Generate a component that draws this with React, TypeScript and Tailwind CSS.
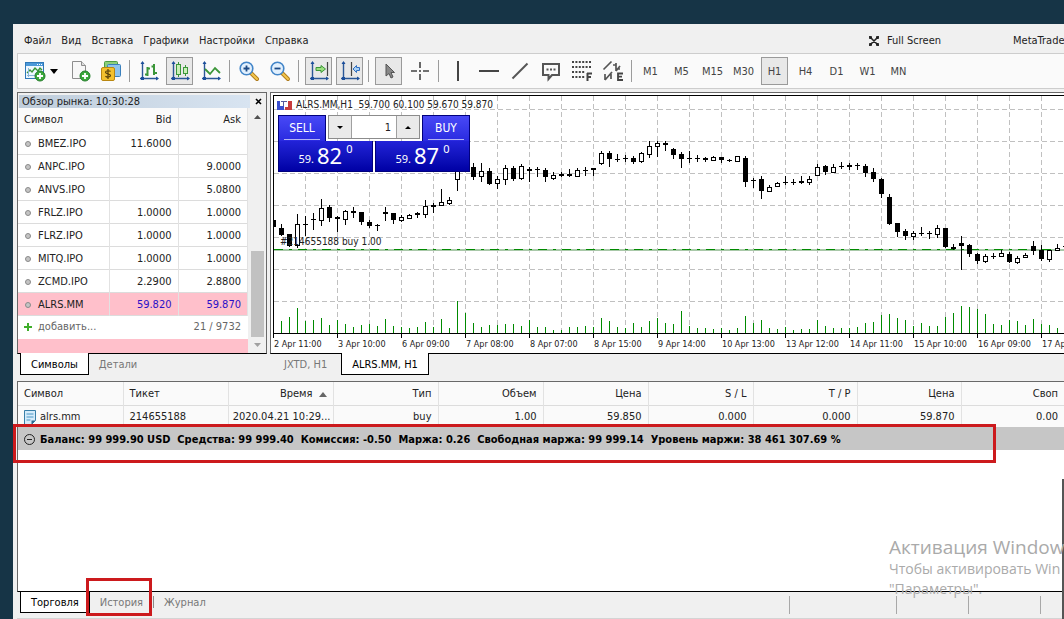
import type { ReactNode } from "react";
import clsx from "clsx";

const menu = ["Файл", "Вид", "Вставка", "Графики", "Настройки", "Справка"];
const timeframes = ["M1", "M5", "M15", "M30", "H1", "H4", "D1", "W1", "MN"];

const quotes = [
  { symbol: "BMEZ.IPO", bid: "11.6000", ask: "" },
  { symbol: "ANPC.IPO", bid: "", ask: "9.0000" },
  { symbol: "ANVS.IPO", bid: "", ask: "5.0800" },
  { symbol: "FRLZ.IPO", bid: "1.0000", ask: "1.0000" },
  { symbol: "FLRZ.IPO", bid: "1.0000", ask: "1.0000" },
  { symbol: "MITQ.IPO", bid: "1.0000", ask: "1.0000" },
  { symbol: "ZCMD.IPO", bid: "2.2900", ask: "2.8800" },
  { symbol: "ALRS.MM", bid: "59.820", ask: "59.870", active: true },
];

const dates = [
  "2 Apr 11:00",
  "3 Apr 10:00",
  "6 Apr 09:00",
  "7 Apr 08:00",
  "8 Apr 07:00",
  "8 Apr 15:00",
  "9 Apr 14:00",
  "10 Apr 13:00",
  "13 Apr 12:00",
  "14 Apr 11:00",
  "15 Apr 10:00",
  "16 Apr 09:00",
  "17 Apr",
];

// high, body top, body bottom, low, bullish (hollow) flag
const candles: number[][] = [
  [124, 124, 131, 131, 0], [128, 132, 139, 139, 0], [138, 138, 150, 150, 0], [118, 128, 149, 151, 1],
  [120, 128, 129, 139, 0], [117, 123, 124, 133, 0], [103, 112, 124, 129, 1], [109, 111, 122, 125, 0],
  [120, 121, 123, 135, 0], [114, 115, 123, 128, 1], [111, 115, 117, 121, 0], [116, 116, 126, 128, 0],
  [124, 126, 130, 131, 0], [128, 129, 130, 134, 0], [111, 116, 118, 124, 0], [117, 117, 124, 127, 0],
  [119, 121, 124, 125, 1], [118, 119, 122, 122, 1], [116, 117, 119, 121, 0], [104, 110, 118, 121, 1],
  [107, 109, 111, 116, 0], [93, 106, 109, 109, 1], [101, 104, 107, 108, 1], [60, 70, 83, 94, 1],
  [64, 68, 74, 75, 0], [67, 71, 81, 83, 0], [67, 75, 80, 85, 1], [72, 75, 88, 88, 0],
  [80, 83, 87, 92, 1], [69, 72, 83, 88, 1], [70, 72, 83, 84, 0], [68, 70, 82, 83, 1],
  [71, 73, 75, 85, 0], [71, 73, 74, 80, 0], [72, 74, 81, 85, 0], [76, 79, 82, 83, 1],
  [76, 78, 80, 80, 0], [73, 78, 80, 80, 0], [72, 74, 80, 80, 1], [71, 74, 75, 79, 0],
  [72, 72, 74, 79, 0], [55, 57, 67, 68, 1], [55, 57, 63, 70, 0], [58, 63, 64, 65, 0],
  [59, 62, 63, 65, 0], [60, 62, 66, 67, 0], [56, 57, 65, 66, 1], [45, 50, 58, 61, 1],
  [45, 47, 50, 60, 1], [45, 47, 49, 54, 0], [52, 53, 59, 62, 0], [56, 58, 63, 71, 0],
  [55, 62, 63, 66, 0], [59, 62, 63, 65, 0], [61, 62, 64, 65, 0], [60, 61, 64, 64, 1],
  [61, 61, 64, 66, 0], [63, 64, 65, 65, 0], [60, 60, 65, 65, 1], [60, 62, 86, 90, 0],
  [82, 84, 85, 91, 0], [80, 83, 95, 102, 0], [89, 91, 95, 95, 1], [86, 87, 90, 90, 1],
  [80, 86, 87, 88, 0], [83, 86, 87, 88, 0], [80, 85, 87, 87, 0], [80, 83, 86, 88, 1],
  [68, 71, 79, 79, 1], [69, 70, 76, 78, 0], [68, 71, 76, 76, 1], [66, 70, 71, 72, 0],
  [67, 69, 71, 73, 0], [67, 69, 70, 73, 0], [68, 70, 77, 80, 0], [72, 76, 83, 85, 0],
  [82, 83, 98, 101, 0], [98, 101, 128, 128, 0], [127, 127, 136, 140, 0], [133, 135, 140, 143, 0],
  [135, 137, 140, 143, 1], [131, 137, 138, 139, 0], [135, 137, 138, 142, 0], [129, 132, 138, 141, 1],
  [132, 132, 151, 151, 0], [148, 151, 153, 153, 0], [140, 147, 150, 173, 0], [148, 149, 158, 160, 0],
  [157, 158, 165, 167, 0], [158, 160, 165, 166, 1], [157, 160, 161, 162, 0], [154, 157, 160, 160, 1],
  [156, 158, 166, 166, 0], [160, 162, 166, 167, 1], [157, 159, 161, 161, 1], [145, 150, 155, 158, 0],
  [149, 154, 163, 164, 0], [154, 154, 163, 165, 1], [148, 152, 154, 154, 1], [150, 150, 151, 151, 0],
];

const volumes = [
  0, 12, 16, 25, 12, 13, 15, 8, 13, 9, 6, 8, 9, 7, 14, 7, 6, 5, 6, 11, 6, 14, 5, 32, 20,
  10, 6, 8, 8, 9, 9, 7, 13, 6, 6, 3, 3, 6, 6, 7, 6, 15, 12, 6, 5, 10, 6, 12, 15, 10,
  9, 22, 7, 5, 5, 4, 5, 3, 5, 17, 10, 13, 5, 4, 6, 3, 4, 4, 13, 7, 5, 5, 5, 6, 10,
  11, 18, 19, 15, 13, 7, 10, 7, 7, 16, 20, 27, 26, 24, 19, 9, 8, 13, 12, 8, 14, 9, 8, 5,
];

const tradeColumns = ["Символ", "Тикет", "Время", "Тип", "Объем", "Цена", "S / L", "T / P", "Цена", "Своп"];
const tradeRow = ["alrs.mm", "214655188", "2020.04.21 10:29...", "buy", "1.00", "59.850", "0.000", "0.000", "59.870", "0.00"];

function ToolButton({ label, active, children }: { label: string; active?: boolean; children: ReactNode }) {
  return (
    <button
      aria-label={label}
      className={clsx(
        "flex h-7 w-[27px] shrink-0 items-center justify-center border text-[#444]",
        active ? "border-[#9a9a9a] bg-[#e8e8e8]" : "border-transparent"
      )}
    >
      {children}
    </button>
  );
}

function Separator({ wide }: { wide?: boolean }) {
  return <span className={clsx("h-[22px] w-px shrink-0 bg-[#9c9c9c]", wide ? "mr-[2px] ml-px" : "mx-px")} />;
}

function Icon({ children }: { children: ReactNode }) {
  return (
    <svg width="22" height="22" viewBox="0 0 22 22" fill="none" className="shrink-0">
      {children}
    </svg>
  );
}

function Axes() {
  return (
    <>
      <path d="M4.5 2v18M2 18.5h18" stroke="#2b5797" strokeWidth="1.4" />
      <path d="M2.5 4l2-3 2 3zM18 16.5l3 2-3 2z" fill="#1c4f9c" />
      <rect x="3" y="17" width="3" height="3" fill="#1c4f9c" />
    </>
  );
}

function PlusBadge() {
  return (
    <>
      <circle cx="16" cy="16" r="5" fill="#3aa83a" stroke="#247d2a" />
      <path d="M16 13v6M13 16h6" stroke="#fff" strokeWidth="1.8" />
    </>
  );
}

function Magnifier({ plus }: { plus?: boolean }) {
  return (
    <Icon>
      <path d="M13 13l6 6" stroke="#b07d1e" strokeWidth="4" strokeLinecap="round" />
      <path d="M13 13l6 6" stroke="#f3c64d" strokeWidth="2" strokeLinecap="round" />
      <circle cx="8.5" cy="8.5" r="6.3" fill="#e2f0fd" stroke="#4285c8" strokeWidth="1.6" />
      <path d={plus ? "M5.5 8.5h6M8.5 5.5v6" : "M5.5 8.5h6"} stroke="#1d4a86" strokeWidth="1.8" />
    </Icon>
  );
}

function Toolbar() {
  return (
    <div className="ml-1 flex h-9 items-center gap-1 overflow-hidden border border-r-0 border-[#cdcdcd] bg-[#fafafa]">
      <button aria-label="Новый график" className="flex h-7 w-11 shrink-0 items-center gap-1 pl-[6px]">
        <Icon>
          <rect x="1.5" y="2.5" width="18" height="16" fill="#eef7ff" stroke="#2f78b8" />
          <path d="M2 3h17v3H2z" fill="#4b98d8" />
          <path d="M13 4.5h5" stroke="#fff" strokeDasharray="1 1" />
          <path d="M3 13l3-3 2 2 3-4 3 3 2-3 2 2" stroke="#3b9639" strokeWidth="1.4" />
          <path d="M4.5 8v9M3 15.5h9" stroke="#8ab6d8" />
          <PlusBadge />
        </Icon>
        <svg width="8" height="5" viewBox="0 0 8 5" className="shrink-0">
          <path d="M0 0h8L4 5z" fill="#000" />
        </svg>
      </button>
      <ToolButton label="Новый ордер">
        <Icon>
          <path d="M3.5 1.5h9l4 4v13h-13z" fill="#f7f7f7" stroke="#8d8d8d" />
          <path d="M12.5 1.5v4h4" fill="#ddd" stroke="#8d8d8d" />
          <PlusBadge />
        </Icon>
      </ToolButton>
      <ToolButton label="Символы">
        <Icon>
          <rect x="4.5" y="1.5" width="13" height="11" rx="1" fill="#8ccf7a" stroke="#4c9c43" />
          <rect x="7.5" y="4.5" width="13" height="12" rx="1" fill="#8ec4ee" stroke="#3a80bd" />
          <rect x="1.5" y="7.5" width="13" height="13" rx="1.5" fill="#f3c12e" stroke="#b98711" />
          <path d="M10.5 11.5c-1-1.2-5-1-5 .8 0 1.9 5 1.3 5 3.2 0 1.8-4 2-5 .6M8 9v10" stroke="#59410a" strokeWidth="1.2" />
        </Icon>
      </ToolButton>
      <Separator />
      <ToolButton label="Бары">
        <Icon>
          <Axes />
          <path d="M9.5 7v9M7 14.5h2.5M9.5 8.5h2.5M16 4v11M13.5 6.5H16M16 13h3" stroke="#3b9639" strokeWidth="2" />
        </Icon>
      </ToolButton>
      <ToolButton label="Свечи" active>
        <Icon>
          <Axes />
          <path d="M9.5 2v15M16.5 5v11" stroke="#3b9639" />
          <rect x="7.5" y="4.5" width="4" height="10" fill="#c9efb8" stroke="#3b9639" />
          <rect x="14.5" y="7.5" width="4" height="6" fill="#c9efb8" stroke="#3b9639" />
        </Icon>
      </ToolButton>
      <ToolButton label="Линия">
        <Icon>
          <Axes />
          <path d="M5 9l5 5 5-6 5 5" stroke="#3b9639" strokeWidth="1.8" />
        </Icon>
      </ToolButton>
      <Separator />
      <ToolButton label="Увеличить">
        <Magnifier plus />
      </ToolButton>
      <ToolButton label="Уменьшить">
        <Magnifier />
      </ToolButton>
      <Separator wide />
      <ToolButton label="Автопрокрутка" active>
        <Icon>
          <Axes />
          <path d="M19.5 2v14" stroke="#444" strokeWidth="1.2" />
          <path d="M8 7.5h5v-2l4.5 3.500-4.500 3.500v-2H8z" fill="#9be07f" stroke="#3b9639" />
        </Icon>
      </ToolButton>
      <ToolButton label="Сдвиг графика" active>
        <Icon>
          <Axes />
          <path d="M12.5 2v14" stroke="#444" strokeWidth="1.2" />
          <path d="M20.5 7.5h-3v-2L14 9l3.5 3.5v-2h3z" fill="#a9d0f5" stroke="#2f6fc0" />
        </Icon>
      </ToolButton>
      <Separator wide />
      <ToolButton label="Курсор" active>
        <Icon>
          <path d="M8 4v12l3-2.5 2 4.5 2-1-2-4.500h3.500z" fill="#888" stroke="#555" />
        </Icon>
      </ToolButton>
      <ToolButton label="Перекрестие">
        <Icon>
          <path d="M11 2v6M11 14v6M2 11h6M14 11h6M11 10v2" stroke="#444" strokeWidth="1.6" />
        </Icon>
      </ToolButton>
      <Separator />
      <ToolButton label="Вертикальная линия">
        <Icon>
          <path d="M11 1v20" stroke="#444" strokeWidth="2" />
        </Icon>
      </ToolButton>
      <ToolButton label="Горизонтальная линия">
        <Icon>
          <path d="M1 11h20" stroke="#444" strokeWidth="2" />
        </Icon>
      </ToolButton>
      <ToolButton label="Трендовая линия">
        <Icon>
          <path d="M3.5 18.5l15-15" stroke="#555" strokeWidth="2" />
        </Icon>
      </ToolButton>
      <ToolButton label="Текст">
        <Icon>
          <path d="M3 4h16v11h-7l-3.5 4v-4H3z" stroke="#555" strokeWidth="2" />
          <path d="M6.5 9.5h9" stroke="#555" strokeWidth="2" strokeDasharray="2 1.5" />
        </Icon>
      </ToolButton>
      <ToolButton label="Фибоначчи">
        <Icon>
          <path d="M1 2h19M1 7h19M1 12h13M1 17h13" stroke="#444" strokeWidth="2" strokeDasharray="2 1.4" />
          <path d="M16.5 21v-8M16 13.5h5M16 17h4" stroke="#444" strokeWidth="2" />
        </Icon>
      </ToolButton>
      <ToolButton label="Элементы">
        <Icon>
          <path
            d="M1.5 9.5l8-8M3 20l7-8M9 14v5M3 14v6M14 3v8M11 5h3M14 9h4M18 6l-4 5"
            stroke="#555"
            strokeWidth="1.7"
          />
          <path d="M21 13.5h-5V20h5M16 16.7h4" stroke="#444" strokeWidth="1.8" />
        </Icon>
      </ToolButton>
      <Separator />
      {timeframes.map((tf) => (
        <ToolButton key={tf} label={tf} active={tf === "H1"}>
          <span className="pt-px">{tf}</span>
        </ToolButton>
      ))}
    </div>
  );
}

function Tab({ active, children }: { active?: boolean; children: ReactNode }) {
  return (
    <button
      className={clsx(
        "-mt-px h-[22px] shrink-0 px-[10px] pt-[2px]",
        active ? "border border-t-0 border-black bg-white text-black" : "text-[#777]"
      )}
    >
      {children}
    </button>
  );
}

function MarketWatch() {
  return (
    <section className="w-[250px] shrink-0">
      <div className="flex h-[262px] flex-col border border-[#696969] border-b-black bg-[#f0f0f0] pt-[2px]">
        <div className="flex h-[13px] items-center justify-between pl-px">
          <h2 className="h-full grow bg-linear-to-r from-[#bfcddb] to-[#d8e4f1] pl-[3px] leading-[14px]">
            Обзор рынка: 10:30:28
          </h2>
          <button aria-label="Закрыть" className="flex w-4 justify-center">
            <svg width="7" height="7" viewBox="0 0 7 7">
              <path d="M1 1l5 5M6 1L1 6" stroke="#000" strokeWidth="1.6" />
            </svg>
          </button>
        </div>
        <div className="flex min-h-0 grow overflow-hidden">
          <div className="min-w-0 grow bg-white">
            <table className="w-full table-fixed border-collapse">
              <thead>
                <tr className="h-[23px] border-b border-[#dcdcdc] bg-[#fafafa]">
                  <th className="w-[91px] border-r border-[#e2e2e2] pt-[2px] pl-[6px] text-left font-normal">Символ</th>
                  <th className="w-[69px] border-r border-[#e2e2e2] pt-[2px] pr-[6px] text-right font-normal">Bid</th>
                  <th className="border-r border-[#e2e2e2] pt-[2px] pr-[6px] text-right font-normal">Ask</th>
                </tr>
              </thead>
              <tbody>
                {quotes.map((q) => (
                  <tr
                    key={q.symbol}
                    className={clsx("h-[23px] border-b border-[#dcdcdc]", q.active && "bg-[#ffc0cb]")}
                  >
                    <td className="border-r border-[#e2e2e2] pt-[2px] pl-[7px]">
                      <span className="flex items-center gap-[7px]">
                        <span className="size-[6px] rounded-full border border-[#8a8a8a] bg-[#c4c4c4]" />
                        {q.symbol}
                      </span>
                    </td>
                    <td className={clsx("border-r border-[#e2e2e2] pt-[2px] pr-[6px] text-right", q.active && "text-[#2a10c8]")}>
                      {q.bid}
                    </td>
                    <td className={clsx("border-r border-[#e2e2e2] pt-[2px] pr-[6px] text-right", q.active && "text-[#2a10c8]")}>
                      {q.ask}
                    </td>
                  </tr>
                ))}
              </tbody>
            </table>
            <div className="flex h-[23px] items-center text-[#666]">
              <svg width="8" height="8" viewBox="0 0 8 8" className="mr-[6px] ml-[6px]">
                <path d="M4 0v8M0 4h8" stroke="#3fae2a" strokeWidth="2" />
              </svg>
              добавить...
              <span className="ml-auto pr-[7px]">21 / 9732</span>
            </div>
            <div className="h-[15px] bg-[#ffc0cb]" />
          </div>
          <div className="flex w-[18px] shrink-0 flex-col items-center pt-[7px] pb-[6px]">
            <svg width="7" height="4" viewBox="0 0 7 4">
              <path d="M0 4h7L3.5 0z" fill="#505050" />
            </svg>
            <div className="mt-auto mb-[6px] h-[86px] w-[13px] bg-[#c1c1c1]" />
            <svg width="7" height="4" viewBox="0 0 7 4">
              <path d="M0 0h7L3.5 4z" fill="#a0a0a0" />
            </svg>
          </div>
        </div>
      </div>
      <div className="flex pl-[3px]">
        <Tab active>Символы</Tab>
        <Tab>Детали</Tab>
      </div>
    </section>
  );
}

function PriceButton({ label, big }: { label: string; big: string }) {
  return (
    <button
      aria-label={label}
      className="flex h-[31px] w-[95px] items-end justify-center border border-t-0 border-[#00007c] bg-linear-to-b from-[#2222d8] to-[#0000a4] pb-1 font-['Noto_Sans',sans-serif] text-white"
    >
      <span className="text-[11px] leading-4">59.</span>
      <span className="ml-[3px] text-[22px] leading-6">{big}</span>
      <span className="ml-1 self-start text-[11px] leading-4">0</span>
    </button>
  );
}

function OneClickTrading() {
  return (
    <div className="absolute top-[19px] left-1 w-48">
      <div className="flex h-[26px] justify-between">
        <button className="w-12 border border-b-0 border-[#00007c] bg-linear-to-b from-[#4848f6] to-[#2a2ae0] px-[5px] text-xs text-white">
          <span className="block border-b border-[#b4b4f4] leading-[22px]">SELL</span>
        </button>
        <div className="flex h-6 w-[92px] border border-[#8c8c8c] bg-white">
          <button aria-label="Меньше" className="flex w-[23px] items-center justify-center border-r border-[#a0a0a0] bg-[#eaeaea]">
            <svg width="6" height="3" viewBox="0 0 6 3">
              <path d="M0 0h6L3 3z" />
            </svg>
          </button>
          <input aria-label="Объем" defaultValue="1" className="w-0 grow pt-[2px] pr-[5px] text-right outline-none" />
          <button aria-label="Больше" className="flex w-[23px] items-center justify-center border-l border-[#a0a0a0] bg-[#eaeaea]">
            <svg width="6" height="3" viewBox="0 0 6 3">
              <path d="M0 3h6L3 0z" />
            </svg>
          </button>
        </div>
        <button className="w-12 border border-b-0 border-[#00007c] bg-linear-to-b from-[#4848f6] to-[#2a2ae0] px-[5px] text-xs text-white">
          <span className="block border-b border-[#b4b4f4] leading-[22px]">BUY</span>
        </button>
      </div>
      <div className="flex justify-between">
        <PriceButton label="Sell 59.820" big="82" />
        <PriceButton label="Buy 59.870" big="87" />
      </div>
    </div>
  );
}

function PriceChart() {
  return (
    <svg className="block h-[237px] w-full" shapeRendering="crispEdges">
      {Array.from({ length: 40 }, (_, i) => (
        <line key={i} x1={31.5 + i * 32} x2={31.5 + i * 32} y1="0" y2="237" stroke="#c0c0c0" strokeDasharray="5 3" />
      ))}
      {Array.from({ length: 7 }, (_, i) => (
        <line key={i} x1="0" x2="100%" y1={13.5 + i * 32} y2={13.5 + i * 32} stroke="#c0c0c0" strokeDasharray="5 3" />
      ))}
      <rect x="0" y="153" width="100%" height="2" fill="#a8c8a8" />
      <line x1="0" x2="100%" y1="153.5" y2="153.5" stroke="#008a00" strokeDasharray="9 6 3 6" />
      {volumes.map((v, i) => (
        <rect key={i} x={i * 8 - 1} y={237 - v} width="1" height={v} fill="#008a00" />
      ))}
      {candles.map(([high, top, bottom, low, up], i) => (
        <g key={i}>
          <rect x={i * 8 - 1} y={high} width="1" height={low - high + 1} />
          {up ? (
            <rect x={i * 8 - 2.5} y={top + 0.5} width="4" height={bottom - top} fill="#fff" stroke="#000" />
          ) : (
            <rect x={i * 8 - 3} y={top} width="5" height={Math.max(bottom - top, 1)} />
          )}
        </g>
      ))}
    </svg>
  );
}

function ChartWindow() {
  return (
    <section className="min-w-0 grow">
      <div className="h-[262px] border-t border-b border-l border-[#696969] border-b-black bg-white pt-[2px] pl-[2px]">
        <div className="relative border-t border-l border-black">
          <PriceChart />
          <div className="absolute top-[2px] left-[3px] flex items-center gap-1 text-[10px] leading-[14px]">
            <svg width="15" height="11" viewBox="0 0 15 11">
              <path d="M0 1h3v5h4v4H0z" fill="#3b4fd0" />
              <path d="M8 7h3V1h4v9H8z" fill="#c83c3c" />
              <path d="M4 1.5h6M6.5 1v5" stroke="#555a9c" />
            </svg>
            <span className="whitespace-pre">ALRS.MM,H1  59.700 60.100 59.670 59.870</span>
          </div>
          <span className="absolute top-[139px] left-[6px] text-[10px] leading-[14px]">#214655188 buy 1.00</span>
          <OneClickTrading />
        </div>
        <div className="flex overflow-hidden border-t border-black text-[9px] leading-3">
          {dates.map((d) => (
            <span key={d} className="h-[18px] w-16 shrink-0 whitespace-nowrap last:w-auto">
              <span className="block h-1 w-px bg-black" />
              <span className="block pl-px">{d}</span>
            </span>
          ))}
        </div>
      </div>
      <div className="flex gap-1 pl-1">
        <Tab>JXTD, H1</Tab>
        <Tab active>ALRS.MM, H1</Tab>
      </div>
    </section>
  );
}

function Toolbox() {
  return (
    <section className="relative mt-[6px] ml-1 flex grow flex-col">
      <div className="grow overflow-hidden border-t border-b border-l border-[#696969] border-b-black bg-white">
        <table className="w-full table-fixed border-collapse">
          <thead>
            <tr className="h-[23px] border-b border-[#dcdcdc] bg-[#fafafa]">
              {tradeColumns.map((name, i) => (
                <th
                  key={i}
                  className={clsx(
                    "border-r border-[#e2e2e2] px-[6px] pt-[2px] font-normal last:border-r-0",
                    i < 7 && "w-[105px]",
                    (i === 7 || i === 8) && "w-[104px]",
                    i < 2 ? "text-left" : "text-right"
                  )}
                >
                  {name}
                  {name === "Время" && (
                    <svg width="8" height="5" viewBox="0 0 8 5" className="ml-[6px] inline">
                      <path d="M0 5h8L4 0z" fill="#666" />
                    </svg>
                  )}
                </th>
              ))}
            </tr>
          </thead>
          <tbody>
            <tr className="h-[22px] bg-[#fafafa]">
              {tradeRow.map((value, i) => (
                <td
                  key={i}
                  className={clsx(
                    "border-r border-[#e2e2e2] pt-[2px] whitespace-nowrap last:border-r-0",
                    i === 2 ? "px-[2px]" : "px-[6px]",
                    i < 2 ? "text-left" : "text-right"
                  )}
                >
                  {i === 0 ? (
                    <span className="flex items-center gap-1">
                      <svg width="12" height="15" viewBox="0 0 12 15" fill="none">
                        <path d="M.5.5h11v10l-4 4h-7z" fill="#d5ebfa" stroke="#3a7fa8" />
                        <path d="M2.5 4h7M2.5 7h7M2.5 10h4" stroke="#4b96c4" />
                        <path d="M11.5 10.5h-4v4z" fill="#2a6a90" />
                      </svg>
                      {value}
                    </span>
                  ) : (
                    value
                  )}
                </td>
              ))}
            </tr>
            <tr className="h-[23px] bg-[#c6c6c6]">
              <td colSpan={10} className="pt-[2px] pl-[6px] font-bold whitespace-pre text-black">
                <span className="flex items-center gap-[5px]">
                  <svg width="11" height="11" viewBox="0 0 11 11" fill="none" stroke="#222">
                    <circle cx="5.5" cy="5.5" r="5" />
                    <path d="M3 5.5h5" />
                  </svg>
                  Баланс: 99 999.90 USD  Средства: 99 999.40  Комиссия: -0.50  Маржа: 0.26  Свободная маржа: 99 999.14  Уровень маржи: 38 461 307.69 %
                </span>
              </td>
            </tr>
          </tbody>
        </table>
      </div>
      <div className="flex h-[27px] overflow-hidden border-b border-[#d4d4d4] pl-[3px]">
        <Tab active>Торговля</Tab>
        <Tab>История</Tab>
        <span className="mt-1 h-3 w-px bg-[#8a8a8a]" />
        <Tab>Журнал</Tab>
        <div className="mt-1 mr-[23px] ml-auto flex h-[18px]">
          <span className="mr-[106px] w-px bg-[#a8a8a8]" />
          <span className="mr-[71px] w-px bg-[#a8a8a8]" />
          <span className="mr-[71px] w-px bg-[#a8a8a8]" />
          <span className="w-px bg-[#a8a8a8]" />
        </div>
      </div>
      {/* Highlights */}
      <div className="absolute top-[43px] right-[68px] -left-1 h-[39px] border-3 border-[#cc1a1d]" />
      <div className="absolute bottom-[3px] left-[69px] h-[38px] w-[66px] border-3 border-[#cc1a1d]" />
      <div className="absolute right-0 bottom-0 h-[140px] w-[2px] bg-[#555]" />
      {/* System watermark */}
      <div className="absolute right-0 bottom-5 w-[175px] font-['Open_Sans',sans-serif] whitespace-nowrap text-[#aaa]">
        <p className="text-[19px] leading-6">Активация Window</p>
        <p className="text-sm leading-5">Чтобы активировать Win</p>
        <p className="text-sm leading-5">"Параметры".</p>
      </div>
    </section>
  );
}

export default function App() {
  return (
    <div className="flex min-h-screen flex-col overflow-hidden bg-[#163446] pt-6 pl-[13px] font-['DejaVu_Sans_Condensed','Noto_Sans',sans-serif] text-[11px] leading-4 text-[#222]">
      <main className="flex grow flex-col bg-[#f0f0f0]">
        <header className="flex h-[29px] items-center pt-[5px] pl-[11px]">
          <nav className="flex gap-[10px]">
            {menu.map((item) => (
              <button key={item}>{item}</button>
            ))}
          </nav>
          <button className="mr-[72px] ml-auto flex items-center gap-2">
            <svg width="10" height="10" viewBox="0 0 10 10" fill="none" stroke="#222" strokeWidth="1.6">
              <path d="M1 1l8 8M9 1L1 9M0 1h3M1 0v3M7 1h3M9 0v3M0 9h3M1 7v3M7 9h3M9 7v3" />
            </svg>
            Full Screen
          </button>
          <span className="w-[51px] whitespace-nowrap">MetaTrade</span>
        </header>
        <Toolbar />
        <div className="mt-[3px] ml-1 flex gap-[3px]">
          <MarketWatch />
          <ChartWindow />
        </div>
        <Toolbox />
      </main>
    </div>
  );
}
